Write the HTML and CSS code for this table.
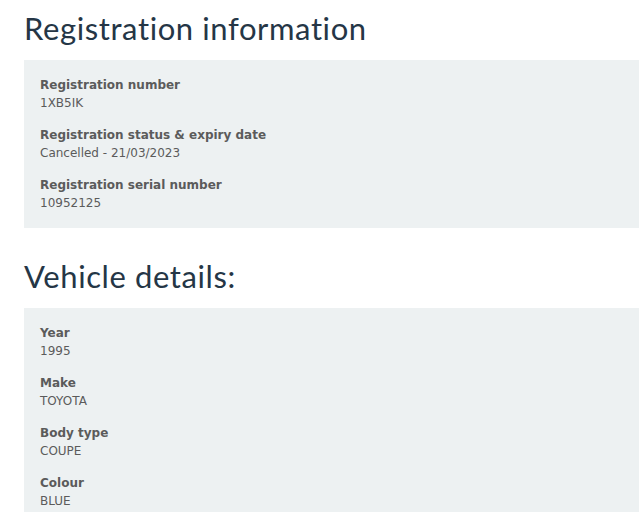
FILE: index.html
```html
<!DOCTYPE html>
<html lang="en">
<head>
<meta charset="utf-8">
<title>Registration information</title>
<link rel="stylesheet" href="styles.css">
</head>
<body>
<main class="page">
  <section class="section">
    <h1 class="title">Registration information</h1>
    <dl class="panel">
      <div class="item"><dt class="label">Registration number</dt><dd class="value">1XB5IK</dd></div>
      <div class="item"><dt class="label">Registration status &amp; expiry date</dt><dd class="value">Cancelled - 21/03/2023</dd></div>
      <div class="item"><dt class="label">Registration serial number</dt><dd class="value">10952125</dd></div>
    </dl>
  </section>
  <section class="section">
    <h2 class="title">Vehicle details:</h2>
    <dl class="panel">
      <div class="item"><dt class="label">Year</dt><dd class="value">1995</dd></div>
      <div class="item"><dt class="label">Make</dt><dd class="value">TOYOTA</dd></div>
      <div class="item"><dt class="label">Body type</dt><dd class="value">COUPE</dd></div>
      <div class="item"><dt class="label">Colour</dt><dd class="value">BLUE</dd></div>
    </dl>
  </section>
</main>
</body>
</html>
```

FILE: styles.css
```css
html, body {
  margin: 0;
  padding: 0;
  background: #ffffff;
}
.page {
  padding-left: 24px;
  display: flex;
  flex-direction: column;
  gap: 20px;
}
.section {
  display: flex;
  flex-direction: column;
}
.title {
  margin: 0;
  height: 60px;
  padding-top: 8px;
  box-sizing: border-box;
  font-family: Lato, "Open Sans", sans-serif;
  font-weight: 400;
  font-size: 31px;
  letter-spacing: 0.6px;
  line-height: 40px;
  color: #253646;
}
.panel {
  margin: 0;
  background: #edf1f2;
  padding: 16px;
  display: flex;
  flex-direction: column;
  gap: 14px;
}
.item {
  display: flex;
  flex-direction: column;
}
.label {
  font-family: "DejaVu Sans", Verdana, sans-serif;
  font-weight: 700;
  font-size: 12px;
  line-height: 18px;
  color: #5b5b5b;
}
.value {
  margin: 0;
  font-family: "DejaVu Sans", Verdana, sans-serif;
  font-size: 12px;
  line-height: 18px;
  color: #5b5b5b;
}
```
